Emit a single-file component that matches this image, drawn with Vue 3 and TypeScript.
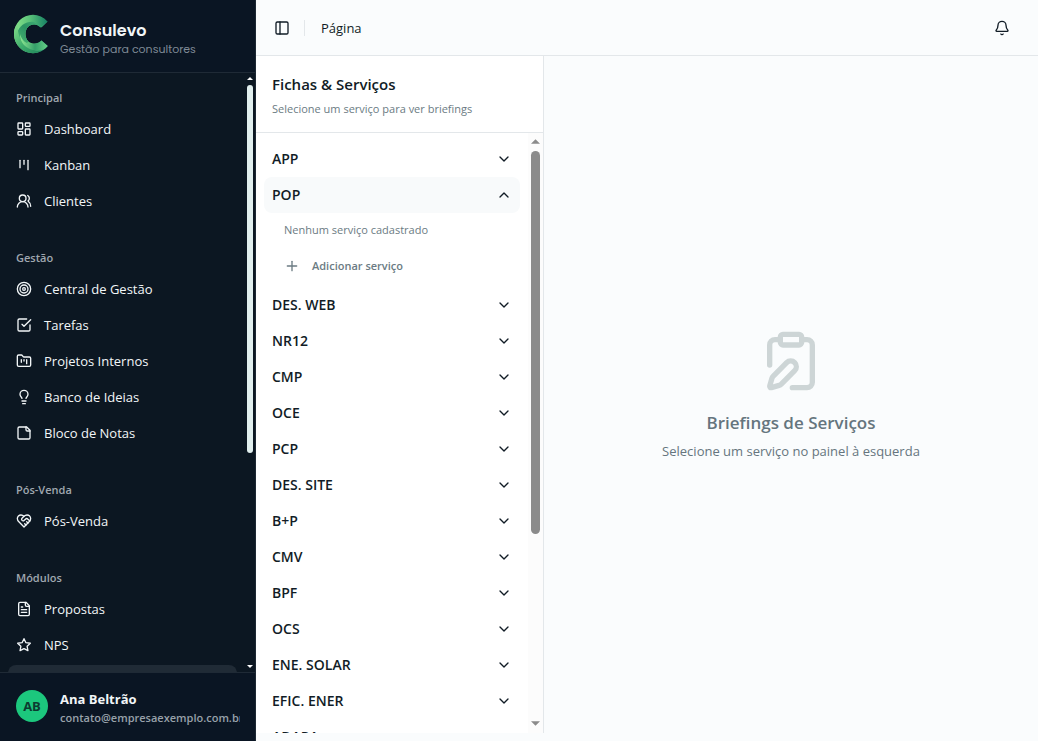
<script setup lang="ts">
import { ref } from 'vue'

interface NavItem {
  label: string
  icon: string[]
  active?: boolean
}
interface NavGroup {
  title: string
  items: NavItem[]
}

const groups: NavGroup[] = [
  {
    title: 'Principal',
    items: [
      { label: 'Dashboard', icon: ['M4 3h5a1 1 0 0 1 1 1v7a1 1 0 0 1-1 1H4a1 1 0 0 1-1-1V4a1 1 0 0 1 1-1z', 'M15 3h5a1 1 0 0 1 1 1v3a1 1 0 0 1-1 1h-5a1 1 0 0 1-1-1V4a1 1 0 0 1 1-1z', 'M15 12h5a1 1 0 0 1 1 1v7a1 1 0 0 1-1 1h-5a1 1 0 0 1-1-1v-7a1 1 0 0 1 1-1z', 'M4 16h5a1 1 0 0 1 1 1v3a1 1 0 0 1-1 1H4a1 1 0 0 1-1-1v-3a1 1 0 0 1 1-1z'] },
      { label: 'Kanban', icon: ['M6 5v11', 'M12 5v6', 'M18 5v14'] },
      { label: 'Clientes', icon: ['M18 21a8 8 0 0 0-16 0', 'M5 8a5 5 0 1 0 10 0a5 5 0 1 0-10 0', 'M22 20c0-3.37-2-6.5-4-8a5 5 0 0 0-.45-8.3'] },
    ],
  },
  {
    title: 'Gestão',
    items: [
      { label: 'Central de Gestão', icon: ['M2 12a10 10 0 1 0 20 0a10 10 0 1 0-20 0', 'M6 12a6 6 0 1 0 12 0a6 6 0 1 0-12 0', 'M10 12a2 2 0 1 0 4 0a2 2 0 1 0-4 0'] },
      { label: 'Tarefas', icon: ['m9 11 3 3L22 4', 'M21 12v7a2 2 0 0 1-2 2H5a2 2 0 0 1-2-2V5a2 2 0 0 1 2-2h11'] },
      { label: 'Projetos Internos', icon: ['M4 20h16a2 2 0 0 0 2-2V8a2 2 0 0 0-2-2h-7.93a2 2 0 0 1-1.66-.9l-.82-1.2A2 2 0 0 0 7.93 3H4a2 2 0 0 0-2 2v13c0 1.1.9 2 2 2Z', 'M8 10v4', 'M12 10v2', 'M16 10v6'] },
      { label: 'Banco de Ideias', icon: ['M15 14c.2-1 .7-1.7 1.5-2.5 1-.9 1.5-2.2 1.5-3.5A6 6 0 0 0 6 8c0 1 .2 2.2 1.5 3.5.7.7 1.3 1.5 1.5 2.5', 'M9 18h6', 'M10 22h4'] },
      { label: 'Bloco de Notas', icon: ['M16 3H5a2 2 0 0 0-2 2v14a2 2 0 0 0 2 2h14a2 2 0 0 0 2-2V8Z', 'M15 3v4a2 2 0 0 0 2 2h4'] },
    ],
  },
  {
    title: 'Pós-Venda',
    items: [
      { label: 'Pós-Venda', icon: ['M19 14c1.49-1.46 3-3.21 3-5.5A5.5 5.5 0 0 0 16.5 3c-1.76 0-3 .5-4.5 2-1.5-1.5-2.74-2-4.5-2A5.5 5.5 0 0 0 2 8.5c0 2.3 1.5 4.05 3 5.5l7 7Z', 'M12 5 9.04 7.96a2.17 2.17 0 0 0 0 3.08c.82.82 2.13.85 3 .07l2.07-1.9a2.82 2.82 0 0 1 3.79 0l2.96 2.66', 'm18 15-2-2', 'm15 18-2-2'] },
    ],
  },
  {
    title: 'Módulos',
    items: [
      { label: 'Propostas', icon: ['M15 2H6a2 2 0 0 0-2 2v16a2 2 0 0 0 2 2h12a2 2 0 0 0 2-2V7Z', 'M14 2v4a2 2 0 0 0 2 2h4', 'M10 9H8', 'M16 13H8', 'M16 17H8'] },
      { label: 'NPS', icon: ['M12 2.5l2.9 6 6.6.9-4.8 4.6 1.2 6.5-5.9-3.1-5.9 3.1 1.2-6.5L2.500 9.4l6.6-.9z'] },
      { label: 'Briefings', active: true, icon: ['M16 4h2a2 2 0 0 1 2 2v14a2 2 0 0 1-2 2H6a2 2 0 0 1-2-2V6a2 2 0 0 1 2-2h2', 'M9 2h6v4H9z'] },
    ],
  },
]

const categories: string[] = [
  'APP', 'POP', 'DES. WEB', 'NR12', 'CMP', 'OCE', 'PCP', 'DES. SITE', 'B+P',
  'CMV', 'BPF', 'OCS', 'ENE. SOLAR', 'EFIC. ENER', 'ADAPA',
]
const open = ref<string | null>('POP')
const collapsed = ref(false)

function toggle(name: string): void {
  open.value = open.value === name ? null : name
}
</script>

<template>
  <div class="app">
    <aside v-show="!collapsed" class="sidebar">
      <header class="brand">
        <svg class="logo" viewBox="0 0 36 40" aria-hidden="true">
          <defs>
            <clipPath id="c-shape">
              <path d="M34.500 7.500C30.500 3 25.500 .8 20 .8 9.500 .8 1 9.300 1 20s8.500 19.200 19 19.200c6 0 11-2.700 14.800-7.200L28.500 26.500c-2 1.800-4.300 3-7.500 3-5 0-8.500-4-8.500-9.500S16 10.500 21 10.500c2.500 0 4.800 1.200 7 3.300z" />
            </clipPath>
            <linearGradient id="g-top" x1="0" y1="0" x2="1" y2="0">
              <stop offset="0" stop-color="#8be58c" />
              <stop offset=".45" stop-color="#5cc47a" />
              <stop offset="1" stop-color="#0f7a62" />
            </linearGradient>
            <linearGradient id="g-inner" x1="0" y1="1" x2="1" y2="0">
              <stop offset="0" stop-color="#4fbd75" />
              <stop offset=".5" stop-color="#2b9363" />
              <stop offset="1" stop-color="#4fc183" />
            </linearGradient>
            <linearGradient id="g-left" x1="0" y1="0" x2="1" y2="1">
              <stop offset="0" stop-color="#86e08a" />
              <stop offset=".5" stop-color="#3fae6d" />
              <stop offset="1" stop-color="#1d8159" />
            </linearGradient>
            <linearGradient id="g-low" x1="0" y1="0" x2="1" y2="0">
              <stop offset="0" stop-color="#8fe892" />
              <stop offset=".5" stop-color="#35a06a" />
              <stop offset="1" stop-color="#6fd98c" />
            </linearGradient>
          </defs>
          <g clip-path="url(#c-shape)">
            <path fill="url(#g-top)" d="M0 0h36v40H0z" />
            <path fill="url(#g-inner)" d="M4 20C6 11 14 7 21 8l7 5 8-7v8L22 12 12 34C7 30 3 26 4 20z" />
            <path fill="url(#g-left)" d="M0 14l5-3c-1 9 3 17 10 22 5 3 10 5 14 4l-9 4C8 42-2 32 0 14z" />
            <path fill="url(#g-low)" d="M7 20c2 7 7 11 14 10 3-.5 6-2 8-5l8 7c-4 4-10 5-16 4C13 35 7 29 7 20z" />
          </g>
        </svg>
        <div class="brand-text">
          <strong>Consulevo</strong>
          <span>Gestão para consultores</span>
        </div>
      </header>

      <div class="nav-area">
        <nav class="nav" aria-label="Menu principal">
          <section v-for="g in groups" :key="g.title" class="group">
            <h2>{{ g.title }}</h2>
            <ul>
              <li v-for="item in g.items" :key="item.label">
                <a href="#" :class="{ active: item.active }" :aria-current="item.active ? 'page' : undefined">
                  <svg class="icon" viewBox="0 0 24 24" aria-hidden="true"><path v-for="d in item.icon" :key="d" :d="d" /></svg>
                  <span>{{ item.label }}</span>
                </a>
              </li>
            </ul>
          </section>
        </nav>
        <div class="rail rail-dark" aria-hidden="true">
          <svg viewBox="0 0 8 4"><path d="M0 4l4-4 4 4z" /></svg>
          <div class="track"><i class="thumb"></i></div>
          <svg viewBox="0 0 8 4"><path d="M0 0l4 4 4-4z" /></svg>
        </div>
      </div>

      <footer class="user">
        <span class="avatar">AB</span>
        <div class="user-text">
          <strong>Ana Beltrão</strong>
          <span>contato@empresaexemplo.com.br</span>
        </div>
      </footer>
    </aside>

    <div class="content">
      <header class="topbar">
        <button type="button" class="icon-btn" aria-label="Alternar menu" @click="collapsed = !collapsed">
          <svg class="icon" viewBox="0 0 24 24" aria-hidden="true"><rect x="3" y="3" width="18" height="18" rx="2" /><path d="M9 3v18" /></svg>
        </button>
        <span class="divider"></span>
        <span class="crumb">Página</span>
        <button type="button" class="icon-btn bell" aria-label="Notificações">
          <svg class="icon" viewBox="0 0 24 24" aria-hidden="true"><path d="M10.268 21a2 2 0 0 0 3.464 0" /><path d="M3.262 15.326A1 1 0 0 0 4 17h16a1 1 0 0 0 .74-1.673C19.410 13.956 18 12.499 18 8A6 6 0 0 0 6 8c0 4.499-1.411 5.956-2.738 7.326" /></svg>
        </button>
      </header>

      <main class="workspace">
        <section class="panel">
          <header class="panel-head">
            <h1>Fichas &amp; Serviços</h1>
            <p>Selecione um serviço para ver briefings</p>
          </header>
          <div class="list-area">
            <div class="list">
              <div v-for="name in categories" :key="name">
                <button type="button" class="row" :class="{ open: open === name }" :aria-expanded="open === name" @click="toggle(name)">
                  <span>{{ name }}</span>
                  <svg class="icon" viewBox="0 0 24 24" aria-hidden="true"><path :d="open === name ? 'm18 15-6-6-6 6' : 'm6 9 6 6 6-6'" /></svg>
                </button>
                <div v-if="open === name" class="detail">
                  <p>Nenhum serviço cadastrado</p>
                  <button type="button" class="add">
                    <svg class="icon" viewBox="0 0 24 24" aria-hidden="true"><path d="M5 12h14" /><path d="M12 5v14" /></svg>
                    Adicionar serviço
                  </button>
                </div>
              </div>
            </div>
            <div class="rail rail-light" aria-hidden="true">
              <svg viewBox="0 0 10 5"><path d="M0 5l5-5 5 5z" /></svg>
              <div class="track"><i class="thumb"></i></div>
              <svg viewBox="0 0 10 5"><path d="M0 0l5 5 5-5z" /></svg>
            </div>
          </div>
        </section>

        <section class="empty">
          <svg class="icon" viewBox="0 0 24 24" aria-hidden="true">
            <rect x="8" y="2" width="8" height="4" rx="1" />
            <path d="M16 4h2a2 2 0 0 1 2 2v14a2 2 0 0 1-2 2h-5.500" />
            <path d="M4 13.500V6a2 2 0 0 1 2-2h2" />
            <path d="M13.378 15.626a1 1 0 1 0-3.004-3.004l-5.010 5.012a2 2 0 0 0-.506.854l-.837 2.870a.5.5 0 0 0 .620.620l2.870-.837a2 2 0 0 0 .854-.506z" />
          </svg>
          <h2>Briefings de Serviços</h2>
          <p>Selecione um serviço no painel à esquerda</p>
        </section>
      </main>
    </div>
  </div>
</template>

<style>
body {
  margin: 0;
}
</style>

<style scoped>
.app {
  display: flex;
  height: 100vh;
  overflow: hidden;
  background: #fafcfd;
  color: #111c26;
  font: 13px/20px "Segoe UI", "Open Sans", "Noto Sans", sans-serif;
}
.app *,
.app *::before {
  box-sizing: border-box;
}
h1, h2, p, ul {
  margin: 0;
  padding: 0;
}
ul {
  list-style: none;
}
button {
  border: 0;
  background: none;
  padding: 0;
  color: inherit;
  font: inherit;
  cursor: pointer;
}
.icon {
  width: 16px;
  height: 16px;
  flex: none;
  fill: none;
  stroke: currentColor;
  stroke-width: 2;
  stroke-linecap: round;
  stroke-linejoin: round;
}

.sidebar {
  display: flex;
  flex-direction: column;
  width: 256px;
  flex: none;
  background: #0c1722;
  border-right: 1px solid #1d2833;
  color: #f2f6f8;
}
.brand {
  display: flex;
  align-items: center;
  gap: 11px;
  height: 73px;
  flex: none;
  padding: 0 13px;
  background: #0a1523;
  border-bottom: 1px solid #1f2a36;
}
.logo {
  width: 36px;
  height: 40px;
  margin-bottom: 4px;
}
.brand-text {
  display: flex;
  flex-direction: column;
  padding-top: 6px;
  font-family: Poppins, Inter, sans-serif;
}
.brand-text strong {
  font-size: 16px;
  line-height: 20px;
  font-weight: 600;
}
.brand-text span {
  font-size: 11px;
  line-height: 17px;
  color: #7f8a96;
}
.nav-area {
  display: flex;
  flex: 1;
  min-height: 0;
}
.nav {
  flex: 1;
  min-width: 0;
  overflow-y: auto;
  scrollbar-width: none;
}
.group {
  padding: 8px;
}
.group + .group {
  margin-top: 8px;
}
.group h2 {
  padding: 2px 8px 0;
  font-size: 11px;
  line-height: 30px;
  font-weight: 600;
  color: #a0a8b0;
}
.group ul {
  display: flex;
  flex-direction: column;
  gap: 4px;
}
.group a {
  display: flex;
  align-items: center;
  gap: 12px;
  height: 32px;
  padding: 0 8px;
  border-radius: 8px;
  color: inherit;
  text-decoration: none;
}
.group a.active {
  background: #202b36;
}

.rail {
  display: flex;
  flex-direction: column;
  align-items: center;
  flex: none;
}
.rail .track {
  flex: 1;
  width: 100%;
  display: flex;
  justify-content: center;
}
.thumb {
  border-radius: 8px;
}
.rail-dark {
  width: 10px;
  padding: 4px 0;
  gap: 5px;
}
.rail-dark svg {
  width: 6px;
  height: 3px;
  fill: #ffffff;
}
.rail-dark .thumb {
  width: 6px;
  height: 64%;
  background: #e1efee;
}
.rail-light {
  width: 15px;
  padding: 6px 0 7px;
  gap: 7px;
  background: #fcfcfc;
}
.rail-light svg {
  width: 9px;
  height: 5px;
  fill: #8b8b8b;
}
.rail-light .thumb {
  width: 9px;
  height: 68%;
  background: #8b8b8b;
}

.user {
  display: flex;
  align-items: center;
  gap: 12px;
  height: 69px;
  flex: none;
  padding: 0 15px 2px 16px;
  background: #0a1523;
  border-top: 1px solid #1f2a36;
}
.avatar {
  display: grid;
  place-items: center;
  width: 32px;
  height: 32px;
  flex: none;
  border-radius: 50%;
  background: #1cc77d;
  color: #0c3a30;
  font-size: 13px;
  font-weight: 700;
}
.user-text {
  display: flex;
  flex-direction: column;
  min-width: 0;
  padding-top: 4px;
  font-weight: 600;
}
.user-text strong {
  line-height: 18px;
  font-weight: 700;
}
.user-text span {
  overflow: hidden;
  white-space: nowrap;
  font-size: 11px;
  line-height: 19px;
  color: #98a1aa;
}

.content {
  display: flex;
  flex-direction: column;
  flex: 1;
  min-width: 0;
}
.topbar {
  display: flex;
  align-items: center;
  height: 56px;
  flex: none;
  padding: 0 22px 0 12px;
  border-bottom: 1px solid #e3e7ea;
}
.icon-btn {
  display: grid;
  place-items: center;
  width: 28px;
  height: 28px;
}
.divider {
  width: 1px;
  height: 16px;
  margin: 0 16px 0 8px;
  background: #e3e7ea;
}
.bell {
  margin-left: auto;
}
.workspace {
  display: flex;
  flex: 1;
  min-height: 0;
}
.panel {
  display: flex;
  flex-direction: column;
  width: 288px;
  flex: none;
  margin-bottom: 8px;
  background: #ffffff;
  border-right: 1px solid #e3e7ea;
}
.panel-head {
  padding: 16px 16px 14px;
  border-bottom: 1px solid #e3e7ea;
}
.panel-head h1 {
  font-size: 15px;
  line-height: 24px;
  font-weight: 600;
}
.panel-head p {
  margin-top: 4px;
  font-size: 11px;
  line-height: 18px;
  color: #6b7b83;
}
.list-area {
  display: flex;
  flex: 1;
  min-height: 0;
}
.list {
  flex: 1;
  min-width: 0;
  padding: 8px;
  overflow-y: auto;
  scrollbar-width: none;
}
.row {
  display: flex;
  align-items: center;
  justify-content: space-between;
  width: 100%;
  height: 36px;
  padding: 0 8px;
  border-radius: 8px;
  font-size: 14px;
  font-weight: 600;
}
.row.open {
  background: #f8fafb;
}
.detail {
  display: flex;
  flex-direction: column;
  padding: 0 0 5px 12px;
  font-size: 11px;
  color: #6b7b83;
}
.detail p {
  padding: 8px 8px 11px;
  line-height: 18px;
}
.add {
  display: flex;
  align-items: center;
  gap: 12px;
  height: 32px;
  padding: 0 8px;
  font-weight: 600;
}
.empty {
  display: flex;
  flex-direction: column;
  align-items: center;
  justify-content: center;
  flex: 1;
  padding-bottom: 8px;
  color: #65757e;
  text-align: center;
}
.empty .icon {
  width: 64px;
  height: 64px;
  margin-bottom: 16px;
  color: #cdd5d6;
}
.empty h2 {
  font-size: 17px;
  line-height: 28px;
  font-weight: 600;
}
.empty p {
  margin-top: 4px;
}
</style>
